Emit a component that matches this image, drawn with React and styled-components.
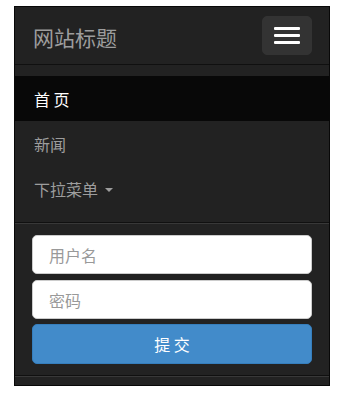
import React from "react";
import styled, { createGlobalStyle } from "styled-components";

const Global = createGlobalStyle`
  html, body { margin: 0; padding: 0; background: #fff; }
  body {
    font-family: "Noto Sans CJK SC", "Noto Sans", "Liberation Sans", sans-serif;
  }
  * { box-sizing: border-box; }
`;

const Page = styled.div`
  padding: 6px 0 0 14px;
`;

const Navbar = styled.nav`
  width: 316px;
  background: #222;
  border: 1px solid #080808;
`;

const Header = styled.div`
  height: 58px;
  display: flex;
  align-items: center;
  justify-content: space-between;
  padding: 0 17px 0 18px;
  border-bottom: 1px solid #101010;
`;

const Brand = styled.a`
  font-size: 21px;
  line-height: 24px;
  color: #9d9d9d;
  text-decoration: none;
  margin-top: 2px;
`;

const Toggle = styled.button`
  width: 50px;
  height: 39px;
  border: 1px solid #333;
  border-radius: 5px;
  background: #333;
  display: flex;
  flex-direction: column;
  align-items: center;
  justify-content: center;
  gap: 4px;
  padding: 0;
  margin-bottom: 1px;
`;

const Bar = styled.span`
  display: block;
  width: 26px;
  height: 3px;
  border-radius: 1px;
  background: #fff;
`;

const Nav = styled.ul`
  list-style: none;
  margin: 0;
  padding: 11px 0;
`;

const NavLink = styled.a`
  display: flex;
  align-items: center;
  height: 45px;
  padding: 0 19px;
  font-size: 16px;
  color: ${(p) => (p.$active ? "#fff" : "#9d9d9d")};
  background: ${(p) => (p.$active ? "#080808" : "transparent")};
  text-decoration: none;
  white-space: pre;
`;

const Caret = styled.span`
  display: inline-block;
  width: 0;
  height: 0;
  margin-left: 7px;
  margin-top: 2px;
  border-top: 4px solid #9d9d9d;
  border-left: 4px solid transparent;
  border-right: 4px solid transparent;
`;

const Form = styled.form`
  margin-bottom: 9px;
  padding: 12px 17px 11px;
  border-top: 1px solid #101010;
  border-bottom: 1px solid #101010;
  box-shadow: inset 0 1px 0 rgba(255, 255, 255, 0.1), 0 1px 0 rgba(255, 255, 255, 0.1);
  display: flex;
  flex-direction: column;
`;

const Input = styled.input`
  height: 39px;
  width: 100%;
  margin-bottom: ${(p) => p.$gap}px;
  padding: 0 16px;
  border: 1px solid #ccc;
  border-radius: 5px;
  background: #fff;
  font-family: inherit;
  font-size: 16px;
  color: #555;
  outline: none;
  &::placeholder { color: #999; }
`;

const Submit = styled.button`
  height: 40px;
  width: 100%;
  border: 1px solid #357ebd;
  border-radius: 5px;
  background: #428bca;
  color: #fff;
  font-family: inherit;
  font-size: 16px;
  white-space: pre;
  padding: 0;
`;

export default function App() {
  return (
    <>
      <Global />
      <Page>
        <Navbar>
          <Header>
            <Brand href="#">网站标题</Brand>
            <Toggle type="button" aria-label="menu">
              <Bar />
              <Bar />
              <Bar />
            </Toggle>
          </Header>
          <Nav>
            <li><NavLink href="#" $active>首 页</NavLink></li>
            <li><NavLink href="#">新闻</NavLink></li>
            <li><NavLink href="#">下拉菜单<Caret /></NavLink></li>
          </Nav>
          <Form onSubmit={(e) => e.preventDefault()}>
            <Input placeholder="用户名" $gap={6} />
            <Input placeholder="密码" type="text" $gap={5} />
            <Submit type="submit">提 交</Submit>
          </Form>
        </Navbar>
      </Page>
    </>
  );
}
